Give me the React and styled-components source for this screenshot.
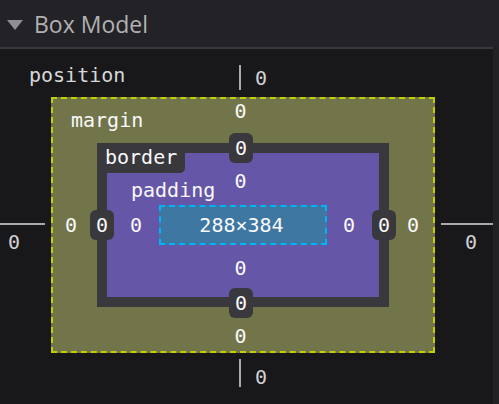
import React from "react";
import styled, { createGlobalStyle } from "styled-components";

const GlobalStyle = createGlobalStyle`
  html, body {
    margin: 0;
    padding: 0;
    background: #18181a;
    overflow: hidden;
  }
`;

const Page = styled.div`
  width: 499px;
  height: 404px;
  display: flex;
  flex-direction: column;
  background: #18181a;
  font-family: "DejaVu Sans Mono", "Liberation Mono", monospace;
  font-size: 20px;
  line-height: 20px;
  font-feature-settings: "zero" 1;
`;

const Header = styled.div`
  height: 47px;
  flex-shrink: 0;
  display: flex;
  align-items: center;
  gap: 11px;
  padding-left: 7px;
  background: #232327;
  color: #b1b1b3;
  font-family: "Open Sans", "Noto Sans", sans-serif;
  font-size: 23px;
`;

const Twisty = styled.span`
  width: 0;
  height: 0;
  border-left: 8px solid transparent;
  border-right: 8px solid transparent;
  border-top: 10px solid #8f8f94;
  margin-top: 2px;
`;

const Body = styled.div`
  flex: 1;
  display: flex;
`;

const Panel = styled.div`
  flex: 1;
  display: flex;
  flex-direction: column;
  border-top: 2px solid #38383d;
`;

const Scrollbar = styled.div`
  width: 6px;
  background: #212124;
`;

const OffsetRow = styled.div`
  display: grid;
  grid-template-columns: 239px 1fr;
  height: ${(p) => p.$height}px;
  padding-top: ${(p) => p.$top}px;
  box-sizing: border-box;
`;

const PositionLabel = styled.div`
  padding-left: 29px;
  color: #d7d7db;
`;

const VOffset = styled.div`
  display: flex;
  align-items: flex-start;
  gap: 14px;
`;

const VLine = styled.span`
  width: 2px;
  height: ${(p) => p.$len}px;
  background: #a9a9ad;
`;

const OffsetValue = styled.span`
  color: #d2d2d5;
  margin-top: ${(p) => p.$top || 0}px;
  padding-left: ${(p) => p.$left || 0}px;
`;

const MiddleRow = styled.div`
  display: flex;
`;

const HOffset = styled.div`
  width: ${(p) => (p.$width ? `${p.$width}px` : "auto")};
  flex: ${(p) => (p.$width ? "none" : 1)};
  margin-left: ${(p) => p.$gap || 0}px;
  padding-top: 126px;
  display: flex;
  flex-direction: column;
  gap: 7px;
`;

const BoxSlot = styled.div`
  width: 384px;
  margin-left: 6px;
`;

const HLine = styled.span`
  height: 2px;
  width: 100%;
  background: #a9a9ad;
`;

const MarginBox = styled.div`
  position: relative;
  display: grid;
  grid-template-columns: 44px 292px 44px;
  grid-template-rows: 44px 164px 44px;
  border: 2px dashed #c2cf00;
  background: #72754a;
  color: #f9f9fa;
`;

const BoxLabel = styled.span`
  position: absolute;
  left: ${(p) => p.$left}px;
  top: ${(p) => p.$top}px;
`;

const Cell = styled.div`
  grid-column: ${(p) => p.$col};
  grid-row: ${(p) => p.$row};
  display: flex;
  align-items: ${(p) => p.$align || "center"};
  justify-content: ${(p) => p.$justify || "center"};
  padding: ${(p) => p.$pad || "0"};
`;

const BorderBox = styled.div`
  grid-column: 2;
  grid-row: 2;
  position: relative;
  display: grid;
  grid-template-columns: 52px 168px 52px;
  grid-template-rows: 52px 40px 52px;
  border: 10px solid #38383d;
  background: #6656a7;
`;

const BorderTab = styled.span`
  position: absolute;
  left: -10px;
  top: -10px;
  padding: 4px 8px 6px 8px;
  background: #38383d;
  border-bottom-right-radius: 5px;
`;

const Badge = styled.span`
  position: absolute;
  width: 24px;
  height: 30px;
  display: flex;
  align-items: center;
  justify-content: center;
  background: #38383d;
  border-radius: 6px;
  left: ${(p) => p.$x}px;
  top: ${(p) => p.$y}px;
`;

const ContentBox = styled.div`
  grid-column: 2;
  grid-row: 2;
  display: flex;
  align-items: center;
  justify-content: center;
  padding-right: 3px;
  border: 2px dashed #00b4f5;
  background: #3e77a1;
`;

export default function App() {
  return (
    <Page>
      <GlobalStyle />
      <Header>
        <Twisty />
        <span>Box Model</span>
      </Header>
      <Body>
        <Panel>
          <OffsetRow $height={48} $top={16}>
            <PositionLabel>position</PositionLabel>
            <VOffset>
              <VLine $len={25} />
              <OffsetValue $top={3}>0</OffsetValue>
            </VOffset>
          </OffsetRow>

          <MiddleRow>
            <HOffset $width={45}>
              <HLine />
              <OffsetValue $left={8}>0</OffsetValue>
            </HOffset>
            <BoxSlot>
              <MarginBox>
                <BoxLabel $left={18} $top={11}>margin</BoxLabel>
                <Cell $col="1 / 4" $row={1} $align="flex-start" $pad="2px 5px 0 0">0</Cell>
                <Cell $col={1} $row={2} $justify="flex-start" $pad="0 0 0 12px">0</Cell>
                <BorderBox>
                  <BorderTab>border</BorderTab>
                  <Badge $x={122} $y={-20}>0</Badge>
                  <Badge $x={-17} $y={57}>0</Badge>
                  <Badge $x={265} $y={57}>0</Badge>
                  <Badge $x={122} $y={135}>0</Badge>
                  <BoxLabel $left={24} $top={27}>padding</BoxLabel>
                  <Cell $col="1 / 4" $row={1} $align="flex-start" $pad="18px 5px 0 0">0</Cell>
                  <Cell $col={1} $row={2} $justify="flex-end" $pad="0 17px 0 0">0</Cell>
                  <ContentBox>288×384</ContentBox>
                  <Cell $col={3} $row={2} $justify="flex-start" $pad="0 0 0 16px">0</Cell>
                  <Cell $col="1 / 4" $row={3} $align="flex-start" $pad="13px 5px 0 0">0</Cell>
                </BorderBox>
                <Cell $col={3} $row={2} $justify="flex-end" $pad="0 14px 0 0">0</Cell>
                <Cell $col="1 / 4" $row={3} $align="flex-start" $pad="19px 5px 0 0">0</Cell>
              </MarginBox>
            </BoxSlot>
            <HOffset $gap={6}>
              <HLine />
              <OffsetValue $left={24}>0</OffsetValue>
            </HOffset>
          </MiddleRow>

          <OffsetRow $height={51} $top={6}>
            <span />
            <VOffset>
              <VLine $len={28} />
              <OffsetValue $top={8}>0</OffsetValue>
            </VOffset>
          </OffsetRow>
        </Panel>
        <Scrollbar />
      </Body>
    </Page>
  );
}
